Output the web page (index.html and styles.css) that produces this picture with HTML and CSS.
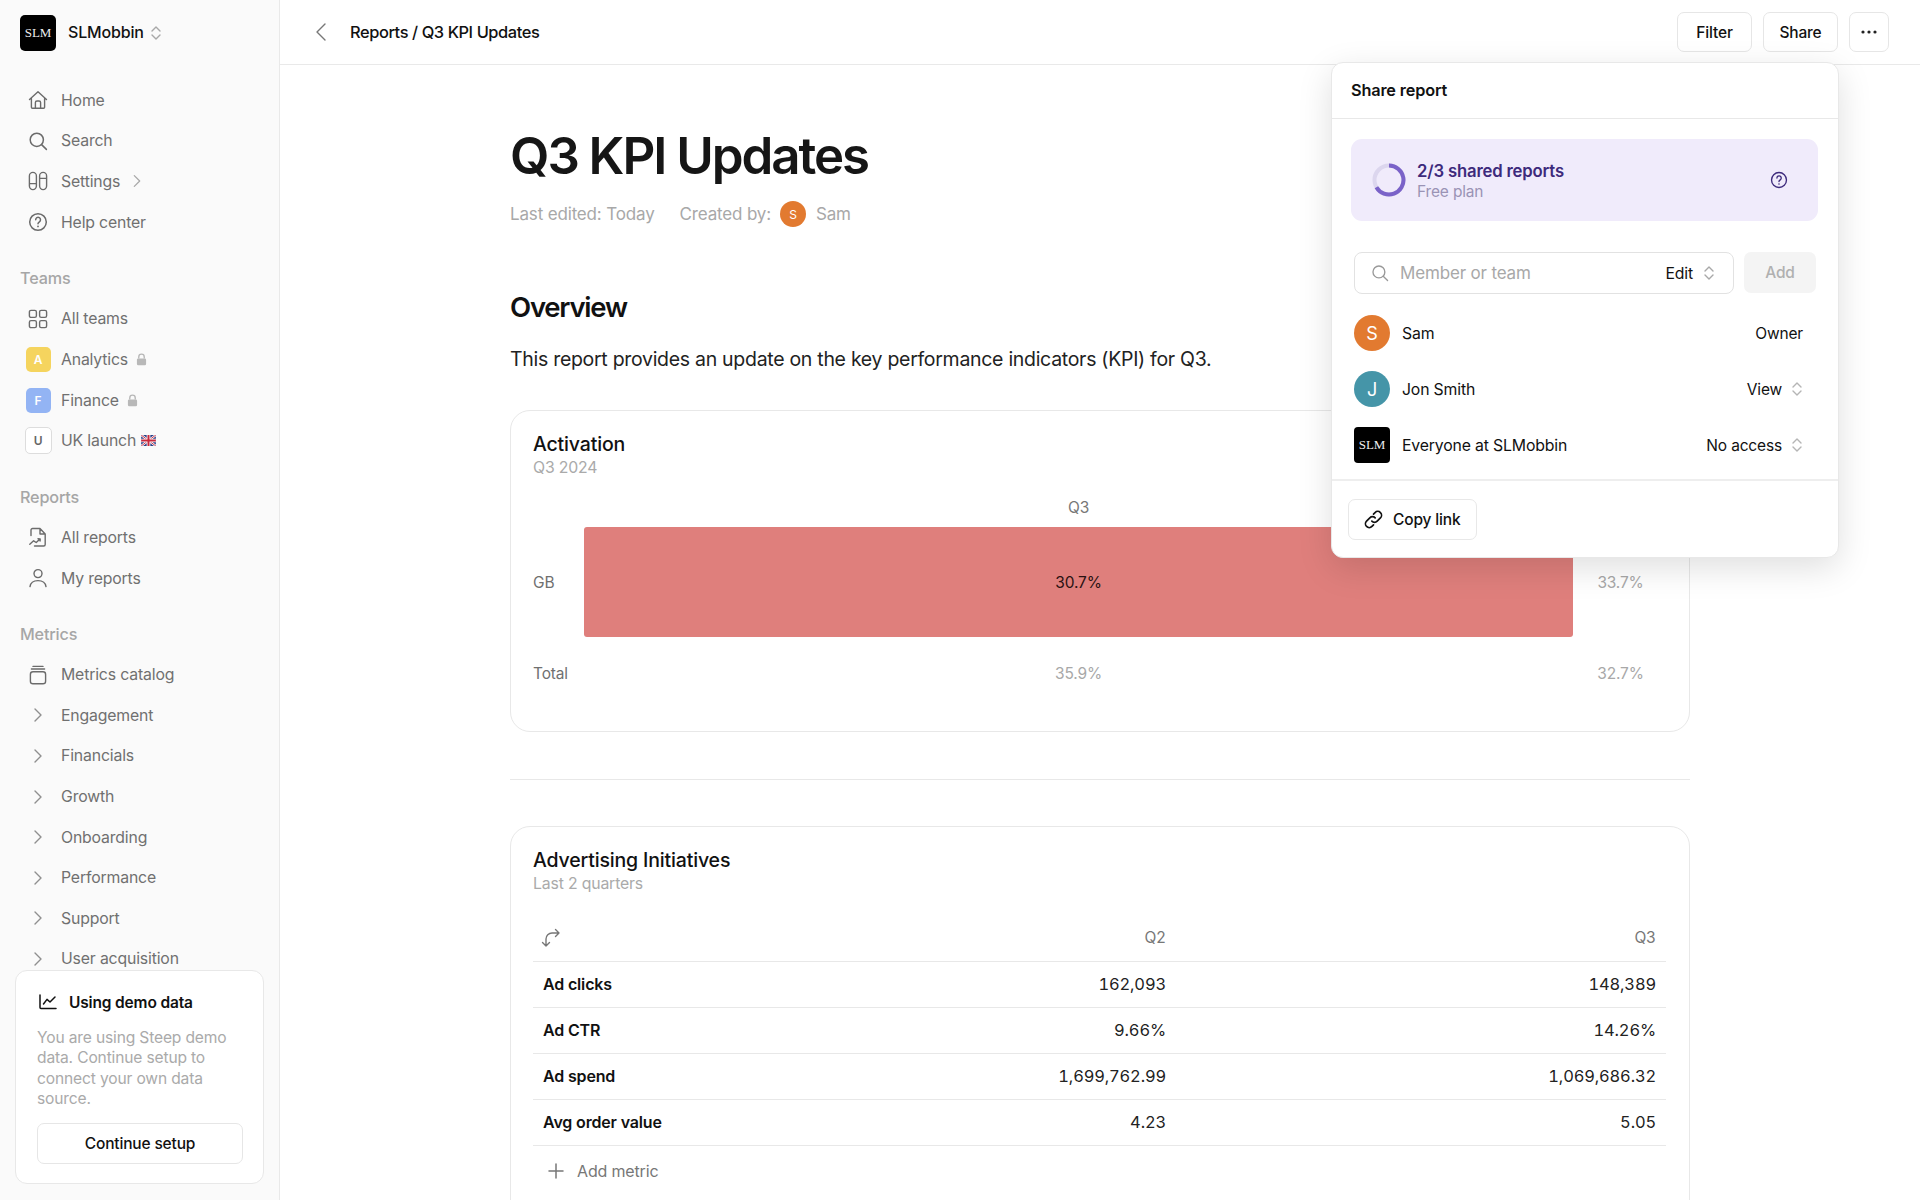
FILE: index.html
```html
<!DOCTYPE html>
<html lang="en">
<head>
<meta charset="utf-8">
<title>Q3 KPI Updates</title>
<link rel="stylesheet" href="styles.css">
</head>
<body>
<svg class="defs" width="0" height="0" aria-hidden="true">
  <symbol id="updown" viewBox="0 0 12 16"><path d="M2 6l4-4 4 4M2 10l4 4 4-4" fill="none" stroke="currentColor" stroke-width="1.4" stroke-linecap="round" stroke-linejoin="round"/></symbol>
  <symbol id="chev" viewBox="0 0 20 20"><path d="M7 4l6 6-6 6" fill="none" stroke="currentColor" stroke-width="1.4" stroke-linecap="round" stroke-linejoin="round"/></symbol>
  <symbol id="lock" viewBox="0 0 12 14"><path d="M3 6V4.2a3 3 0 0 1 6 0V6" fill="none" stroke="currentColor" stroke-width="1.5"/><rect x="1" y="6" width="10" height="7.4" rx="1.4" fill="currentColor"/></symbol>
  <symbol id="search" viewBox="0 0 20 20"><circle cx="8.8" cy="8.8" r="6.6" fill="none" stroke="currentColor" stroke-width="1.5"/><path d="M13.6 13.6L18.4 18.4" stroke="currentColor" stroke-width="1.5" stroke-linecap="round"/></symbol>
  <symbol id="help" viewBox="0 0 20 20"><circle cx="10" cy="10" r="8.3" fill="none" stroke="currentColor" stroke-width="1.5"/><path d="M7.7 7.8a2.4 2.4 0 1 1 3.7 2c-.9.6-1.4 1-1.4 2" fill="none" stroke="currentColor" stroke-width="1.5" stroke-linecap="round"/><circle cx="10" cy="14.4" r=".9" fill="currentColor"/></symbol>
</svg>

<div class="app">
  <aside class="sidebar">
    <div class="workspace">
      <span class="logo">SLM</span>
      <span class="workspace-name">SLMobbin</span>
      <svg class="updown"><use href="#updown"/></svg>
    </div>
    <nav class="nav">
      <div class="group">
        <a class="row"><span class="slot"><svg class="ico" viewBox="0 0 20 20"><path d="M1.5 9.5L10 1.8l8.500 7.700M3.400 8v9.200a1 1 0 0 0 1 1h11.200a1 1 0 0 0 1-1V8M7.400 18.200v-5.600a1.600 1.600 0 0 1 1.600-1.600h2a1.600 1.600 0 0 1 1.600 1.600v5.600" fill="none" stroke="currentColor" stroke-width="1.4" stroke-linecap="round" stroke-linejoin="round"/></svg></span>Home</a>
        <a class="row"><span class="slot"><svg class="ico"><use href="#search"/></svg></span>Search</a>
        <a class="row"><span class="slot"><svg class="ico" viewBox="0 0 20 20"><rect x="1.4" y="1.4" width="7" height="17.2" rx="3.5" fill="none" stroke="currentColor" stroke-width="1.4"/><rect x="11.6" y="1.4" width="7" height="17.2" rx="3.5" fill="none" stroke="currentColor" stroke-width="1.4"/><path d="M1.4 12.6h7M11.6 7.4h7" stroke="currentColor" stroke-width="1.4"/></svg></span>Settings<svg class="inline-chev"><use href="#chev"/></svg></a>
        <a class="row"><span class="slot"><svg class="ico"><use href="#help"/></svg></span>Help center</a>
      </div>
      <div class="group">
        <div class="label">Teams</div>
        <a class="row"><span class="slot"><svg class="ico" viewBox="0 0 20 20"><rect x="1.4" y="1.4" width="7" height="7" rx="1.6" fill="none" stroke="currentColor" stroke-width="1.4"/><rect x="11.6" y="1.4" width="7" height="7" rx="1.6" fill="none" stroke="currentColor" stroke-width="1.4"/><rect x="1.4" y="11.6" width="7" height="7" rx="1.6" fill="none" stroke="currentColor" stroke-width="1.4"/><rect x="11.6" y="11.6" width="7" height="7" rx="1.6" fill="none" stroke="currentColor" stroke-width="1.4"/></svg></span>All teams</a>
        <a class="row"><span class="slot"><span class="badge badge-yellow">A</span></span>Analytics<svg class="lock"><use href="#lock"/></svg></a>
        <a class="row"><span class="slot"><span class="badge badge-blue">F</span></span>Finance<svg class="lock"><use href="#lock"/></svg></a>
        <a class="row"><span class="slot"><span class="badge badge-outline">U</span></span>UK launch<svg class="flag" viewBox="0 0 16 12"><rect width="16" height="12" rx="1.5" fill="#2b3f86"/><path d="M0 0l16 12M16 0L0 12" stroke="#fff" stroke-width="2.4"/><path d="M0 0l16 12M16 0L0 12" stroke="#c8283c" stroke-width="1"/><path d="M8 0v12M0 6h16" stroke="#fff" stroke-width="4"/><path d="M8 0v12M0 6h16" stroke="#c8283c" stroke-width="2.2"/></svg></a>
      </div>
      <div class="group">
        <div class="label">Reports</div>
        <a class="row"><span class="slot"><svg class="ico" viewBox="0 0 20 20"><path d="M3 8.500V3a1.500 1.500 0 0 1 1.500-1.500H12L17.200 7v10.500A1.500 1.500 0 0 1 15.700 19H6.500M12 1.500V7h5.200M1.800 17.200l3.800-3.400 2.600 1.700 3.800-3.600M10 11.800l2.200.1-.1 2.100" fill="none" stroke="currentColor" stroke-width="1.4" stroke-linecap="round" stroke-linejoin="round"/></svg></span>All reports</a>
        <a class="row"><span class="slot"><svg class="ico" viewBox="0 0 20 20"><circle cx="10" cy="5.600" r="4" fill="none" stroke="currentColor" stroke-width="1.4"/><path d="M2 18.600c.6-4 3.800-6 8-6s7.400 2 8 6" fill="none" stroke="currentColor" stroke-width="1.4" stroke-linecap="round"/></svg></span>My reports</a>
      </div>
      <div class="group">
        <div class="label">Metrics</div>
        <a class="row"><span class="slot"><svg class="ico" viewBox="0 0 20 20"><rect x="2.400" y="6.800" width="15.200" height="12" rx="2.600" fill="none" stroke="currentColor" stroke-width="1.4"/><path d="M3.400 4h13.200M5 1.400h10" stroke="currentColor" stroke-width="1.4" stroke-linecap="round"/></svg></span>Metrics catalog</a>
        <a class="row"><span class="slot"><svg class="tree-chev"><use href="#chev"/></svg></span>Engagement</a>
        <a class="row"><span class="slot"><svg class="tree-chev"><use href="#chev"/></svg></span>Financials</a>
        <a class="row"><span class="slot"><svg class="tree-chev"><use href="#chev"/></svg></span>Growth</a>
        <a class="row"><span class="slot"><svg class="tree-chev"><use href="#chev"/></svg></span>Onboarding</a>
        <a class="row"><span class="slot"><svg class="tree-chev"><use href="#chev"/></svg></span>Performance</a>
        <a class="row"><span class="slot"><svg class="tree-chev"><use href="#chev"/></svg></span>Support</a>
        <a class="row"><span class="slot"><svg class="tree-chev"><use href="#chev"/></svg></span>User acquisition</a>
      </div>
    </nav>
    <section class="demo">
      <h3 class="demo-title"><svg class="demo-ico" viewBox="0 0 18 16"><path d="M1 1v12.600a1 1 0 0 0 1 1h15" fill="none" stroke="currentColor" stroke-width="1.500" stroke-linecap="round"/><path d="M4.500 10l3.500-4.600 3 2.600 5-5" fill="none" stroke="currentColor" stroke-width="1.500" stroke-linecap="round" stroke-linejoin="round"/></svg>Using demo data</h3>
      <p class="demo-text">You are using Steep demo data. Continue setup to connect your own data source.</p>
      <button class="demo-btn">Continue setup</button>
    </section>
  </aside>

  <main class="main">
    <header class="topbar">
      <svg class="back" viewBox="0 0 12 20"><path d="M10 2L2 10l8 8" fill="none" stroke="currentColor" stroke-width="1.400" stroke-linecap="round" stroke-linejoin="round"/></svg>
      <div class="crumb">Reports / Q3 KPI Updates</div>
      <div class="actions">
        <button class="btn">Filter</button>
        <button class="btn">Share</button>
        <button class="btn btn-more"><svg class="dots" viewBox="0 0 16 4"><circle cx="2" cy="2" r="1.600"/><circle cx="8" cy="2" r="1.600"/><circle cx="14" cy="2" r="1.600"/></svg></button>
      </div>
    </header>

    <div class="content">
      <h1 class="title">Q3 KPI Updates</h1>
      <div class="meta">
        <span>Last edited: Today</span>
        <span class="created">Created by:</span>
        <span class="avatar-sm">S</span>
        <span>Sam</span>
      </div>
      <h2 class="overview">Overview</h2>
      <p class="intro">This report provides an update on the key performance indicators (KPI) for Q3.</p>

      <section class="card card-chart">
        <h3 class="card-title">Activation</h3>
        <div class="card-sub">Q3 2024</div>
        <div class="chart">
          <span></span><span class="chart-head">Q3</span><span></span>
          <span class="chart-name">GB</span><div class="bar">30.7%</div><span class="chart-val">33.7%</span>
          <span class="chart-name">Total</span><span class="chart-val">35.9%</span><span class="chart-val">32.7%</span>
        </div>
      </section>

      <hr class="rule">

      <section class="card">
        <h3 class="card-title">Advertising Initiatives</h3>
        <div class="card-sub">Last 2 quarters</div>
        <table class="table">
          <thead>
            <tr>
              <th class="th-ico"><svg class="swap" viewBox="0 0 20 20"><path d="M5 18V11a6 6 0 0 1 6-6h7M14.500 1.500L18 5l-3.500 3.500M1.500 14.500L5 18l3.500-3.500" fill="none" stroke="currentColor" stroke-width="1.400" stroke-linecap="round" stroke-linejoin="round"/></svg></th>
              <th class="num">Q2</th>
              <th class="num">Q3</th>
            </tr>
          </thead>
          <tbody>
            <tr><td class="metric">Ad clicks</td><td class="num">162,093</td><td class="num">148,389</td></tr>
            <tr><td class="metric">Ad CTR</td><td class="num">9.66%</td><td class="num">14.26%</td></tr>
            <tr><td class="metric">Ad spend</td><td class="num">1,699,762.99</td><td class="num">1,069,686.32</td></tr>
            <tr><td class="metric">Avg order value</td><td class="num">4.23</td><td class="num">5.05</td></tr>
          </tbody>
        </table>
        <div class="add-metric"><svg class="plus" viewBox="0 0 16 16"><path d="M8 1v14M1 8h14" stroke="currentColor" stroke-width="1.500" stroke-linecap="round"/></svg>Add metric</div>
      </section>
    </div>

    <div class="popover">
      <div class="pop-head">Share report</div>
      <div class="plan">
        <svg class="ring" viewBox="0 0 34 34"><circle cx="17" cy="17" r="14.500" fill="none" stroke="#dcd6ee" stroke-width="4"/><path d="M17 2.500A14.500 14.500 0 1 1 4.400 24.200" fill="none" stroke="#7a62c8" stroke-width="4"/></svg>
        <div class="plan-text">
          <div class="plan-title">2/3 shared reports</div>
          <div class="plan-sub">Free plan</div>
        </div>
        <svg class="plan-help"><use href="#help"/></svg>
      </div>
      <div class="invite">
        <div class="invite-input">
          <svg class="invite-search"><use href="#search"/></svg>
          <span class="placeholder">Member or team</span>
          <span class="invite-role">Edit</span>
          <svg class="updown"><use href="#updown"/></svg>
        </div>
        <button class="add-btn">Add</button>
      </div>
      <ul class="people">
        <li class="person"><span class="avatar avatar-orange">S</span><span class="person-name">Sam</span><span class="role">Owner</span></li>
        <li class="person"><span class="avatar avatar-teal">J</span><span class="person-name">Jon Smith</span><span class="role">View</span><svg class="updown"><use href="#updown"/></svg></li>
        <li class="person"><span class="avatar avatar-logo">SLM</span><span class="person-name">Everyone at SLMobbin</span><span class="role">No access</span><svg class="updown"><use href="#updown"/></svg></li>
      </ul>
      <div class="pop-foot">
        <button class="copy"><svg class="link" viewBox="0 0 20 20"><path d="M8.400 11.600a3.600 3.600 0 0 0 5.100 0l3.100-3.100a3.600 3.600 0 0 0-5.100-5.100L10 4.900M11.600 8.400a3.600 3.600 0 0 0-5.100 0l-3.100 3.100a3.600 3.600 0 0 0 5.100 5.100l1.500-1.500" fill="none" stroke="currentColor" stroke-width="1.600" stroke-linecap="round"/></svg>Copy link</button>
      </div>
    </div>
  </main>
</div>
</body>
</html>
```
FILE: styles.css
```css
* { box-sizing: border-box; }
html, body { margin: 0; height: 1200px; overflow: hidden; }
body {
  font-family: "Inter", "Liberation Sans", sans-serif;
  color: #111;
  background: #fff;
  letter-spacing: -0.01em;
}
h1, h2, h3, p, ul { margin: 0; padding: 0; }
ul { list-style: none; }
button { font: inherit; letter-spacing: inherit; color: inherit; background: #fff; cursor: pointer; }
.defs { position: absolute; }

.app { display: flex; height: 1200px; overflow: hidden; }

/* sidebar */
.sidebar {
  width: 280px;
  flex: none;
  height: 1200px;
  background: #fafafa;
  border-right: 1px solid #e9e9e9;
  display: flex;
  flex-direction: column;
}
.workspace { display: flex; align-items: center; height: 66px; padding: 0 20px; flex: none; }
.logo {
  width: 36px; height: 36px;
  border-radius: 5px;
  background: #000;
  color: #eee;
  font-family: "Liberation Serif", serif;
  font-size: 13px;
  display: flex; align-items: center; justify-content: center;
}
.workspace-name { margin: -2px 0 0 12px; font-size: 16px; font-weight: 500; }
.updown { width: 12px; height: 16px; color: #a8a8a8; flex: none; }
.workspace .updown { margin-left: 6px; }

.nav { flex: 1; min-height: 0; overflow: hidden; padding-top: 14px; }
.group { margin-bottom: 15.600px; }
.row, .label { display: flex; align-items: center; height: 40.600px; font-size: 15.800px; }
.row { color: #707070; padding-left: 20px; }
.label { color: #a6a6a6; padding-left: 20px; font-weight: 500; font-size: 16.200px; }
.slot { width: 41px; padding-right: 5px; flex: none; display: flex; align-items: center; justify-content: center; }
.ico { width: 20px; height: 20px; color: #6b6b6b; }
.tree-chev { width: 20px; height: 20px; color: #8f8f8f; }
.inline-chev { width: 18px; height: 18px; margin-left: 8px; color: #a8a8a8; }
.lock { width: 11px; height: 13px; margin-left: 8px; color: #b8b8b8; }
.flag { width: 15px; height: 11px; margin-left: 5px; }
.badge {
  width: 25px; height: 25px;
  border-radius: 5px;
  color: #fff;
  font-size: 12px;
  font-weight: 600;
  display: flex; align-items: center; justify-content: center;
}
.badge-yellow { background: #f5d45e; }
.badge-blue { background: #93b4f4; }
.badge-outline { width: 27px; height: 27px; background: #fff; border: 1px solid #ddd; color: #666; }

.demo {
  flex: none;
  margin: 0 15px 16px;
  height: 214px;
  padding: 20px 21px 20px;
  background: #fff;
  border: 1px solid #e8e8e8;
  border-radius: 12px;
}
.demo-title { display: flex; align-items: center; font-size: 15.500px; font-weight: 600; height: 22px; color: #111; }
.demo-ico { width: 18px; height: 16px; margin-right: 12px; margin-left: 2px; }
.demo-text { margin-top: 15px; font-size: 15.600px; line-height: 20.300px; color: #aaa; }
.demo-btn {
  display: block;
  width: 206px; height: 41px;
  margin-top: 14px;
  border: 1px solid #e6e6e6;
  border-radius: 7px;
  font-size: 15.500px;
  font-weight: 500;
}

/* main */
.main { flex: 1; min-width: 0; position: relative; overflow: hidden; }
.topbar { display: flex; align-items: center; height: 65px; border-bottom: 1px solid #e9e9e9; padding: 0 31px 0 35px; }
.back { width: 12px; height: 20px; color: #777; }
.crumb { margin: -1px 0 0 23px; font-size: 16.400px; font-weight: 500; letter-spacing: -0.025em; }
.actions { margin-left: auto; display: flex; gap: 11px; }
.btn { width: 75px; height: 40px; border: 1px solid #e6e6e6; border-radius: 7px; font-size: 15.500px; font-weight: 500; }
.btn-more { width: 40px; display: flex; align-items: center; justify-content: center; padding: 0; }
.dots { width: 16px; height: 4px; fill: #222; }

.content { padding: 0 0 0 230px; width: 1410px; }
.title { margin-top: 61px; font-size: 51px; line-height: 60px; font-weight: 600; letter-spacing: -0.04em; color: #161616; }
.meta { display: flex; align-items: center; margin-top: 16px; height: 24px; font-size: 17px; color: #a8a8a8; }
.created { margin-left: 25px; }
.avatar-sm {
  width: 26px; height: 26px;
  margin: 0 10px 0 9px;
  border-radius: 50%;
  background: #e27a30;
  color: #fff;
  font-size: 12px;
  display: flex; align-items: center; justify-content: center;
}
.overview { margin-top: 63px; font-size: 27.500px; line-height: 36px; font-weight: 600; letter-spacing: -0.045em; }
.intro { margin-top: 20px; font-size: 19.500px; line-height: 28px; color: #222; letter-spacing: -0.015em; }

.card { margin-top: 37px; padding: 21px 21px 0 22px; border: 1px solid #e8e8e8; border-radius: 20px; height: 500px; }
.card-chart { height: 322px; }
.card-title { font-size: 19.500px; line-height: 24px; font-weight: 500; color: #111; }
.card-sub { margin-top: 2px; font-size: 15.800px; line-height: 20px; color: #aaa; }

.chart { margin-top: 19px; display: grid; grid-template-columns: 51px 989px 95px; grid-template-rows: 30px 110px 72px; }
.chart > span, .bar { font-size: 15.500px; display: flex; align-items: center; justify-content: center; }
.chart .chart-head { color: #777; height: 20px; }
.chart .chart-name { justify-content: flex-start; color: #707070; }
.chart-val { color: #a8a8a8; }
.bar { background: #df7f7c; border-radius: 3px; color: #2a1212; }

.rule { margin: 47px 0 0; border: 0; border-top: 1px solid #e8e8e8; }
.rule + .card { margin-top: 46px; }

.table { width: 1133px; margin-top: 21px; border-collapse: collapse; table-layout: fixed; font-size: 16.500px; }
.table th, .table td { height: 46px; padding: 0 10px; border-bottom: 1px solid #e8e8e8; }
.table th { font-weight: 400; color: #777; font-size: 15.500px; }
.table th:nth-child(1) { width: 400px; }
.table th:nth-child(3) { width: 490px; }
.table th.th-ico { text-align: left; padding-left: 8px; }
.swap { width: 20px; height: 20px; color: #777; vertical-align: middle; }
.table .metric { font-weight: 600; font-size: 16px; }
.num { text-align: right; color: #222; font-variant-numeric: tabular-nums; }
.add-metric { display: flex; align-items: center; height: 50px; margin-left: 15px; color: #777; font-size: 16px; }
.plus { width: 16px; height: 16px; margin-right: 13px; }

/* popover */
.popover {
  position: absolute;
  top: 62px; right: 81px;
  width: 508px; height: 496px;
  background: #fff;
  border: 1px solid #e8e8e8;
  border-radius: 12px;
  box-shadow: 0 10px 34px rgba(0,0,0,.13);
  z-index: 5;
  display: flex;
  flex-direction: column;
}
.pop-head { height: 56px; flex: none; padding: 0 19px 1px; display: flex; align-items: center; border-bottom: 1px solid #e8e8e8; font-size: 16.300px; font-weight: 600; }
.plan { margin: 20px 20px 0 19px; height: 82px; flex: none; padding: 0 30px 0 21px; border-radius: 11px; background: #f0ebfb; display: flex; align-items: center; }
.ring { width: 34px; height: 34px; flex: none; }
.plan-text { margin: 2px 0 0 11px; flex: 1; }
.plan-title { font-size: 16.700px; line-height: 21px; font-weight: 600; color: #3d2a7c; }
.plan-sub { font-size: 15.500px; line-height: 20px; color: #9a93b5; }
.plan-help { width: 18px; height: 18px; color: #3d2a7c; flex: none; }
.invite { display: flex; gap: 10px; margin: 31px 22px 0; flex: none; }
.invite-input { width: 380px; height: 42px; padding: 0 18px 0 16px; border: 1px solid #e2e2e2; border-radius: 8px; display: flex; align-items: center; font-size: 17px; }
.invite-search { width: 18px; height: 18px; color: #999; }
.placeholder { margin-left: 11px; color: #a8a8a8; flex: 1; }
.invite-role { margin-right: 10px; font-size: 15.800px; }
.add-btn { width: 72px; height: 41px; border: 0; border-radius: 7px; background: #f4f4f4; color: #b0b0b0; font-weight: 500; font-size: 15.500px; }
.people { margin-top: 11px; padding: 0 35px 8px 22px; flex: none; height: 176px; border-bottom: 2px solid #eee; }
.person { display: flex; align-items: center; height: 56px; font-size: 15.800px; }
.role { font-size: 15.500px; }
.avatar { width: 36px; height: 36px; flex: none; border-radius: 50%; color: #fff; font-size: 18px; display: flex; align-items: center; justify-content: center; }
.avatar-orange { background: #e27a30; }
.avatar-teal { background: #4595a8; }
.avatar-logo { border-radius: 4px; background: #000; font-size: 13px; color: #eee; font-family: "Liberation Serif", serif; }
.person-name { margin-left: 12px; flex: 1; }
.person .updown { margin-left: 9px; color: #b5b5b5; }
.pop-foot { padding: 18px 16px 0; }
.copy { display: flex; align-items: center; height: 41px; width: 129px; padding: 0 0 0 14px; border: 1px solid #e8e8e8; border-radius: 7px; font-size: 15.500px; font-weight: 500; }
.link { width: 21px; height: 21px; margin-right: 9px; }
```
